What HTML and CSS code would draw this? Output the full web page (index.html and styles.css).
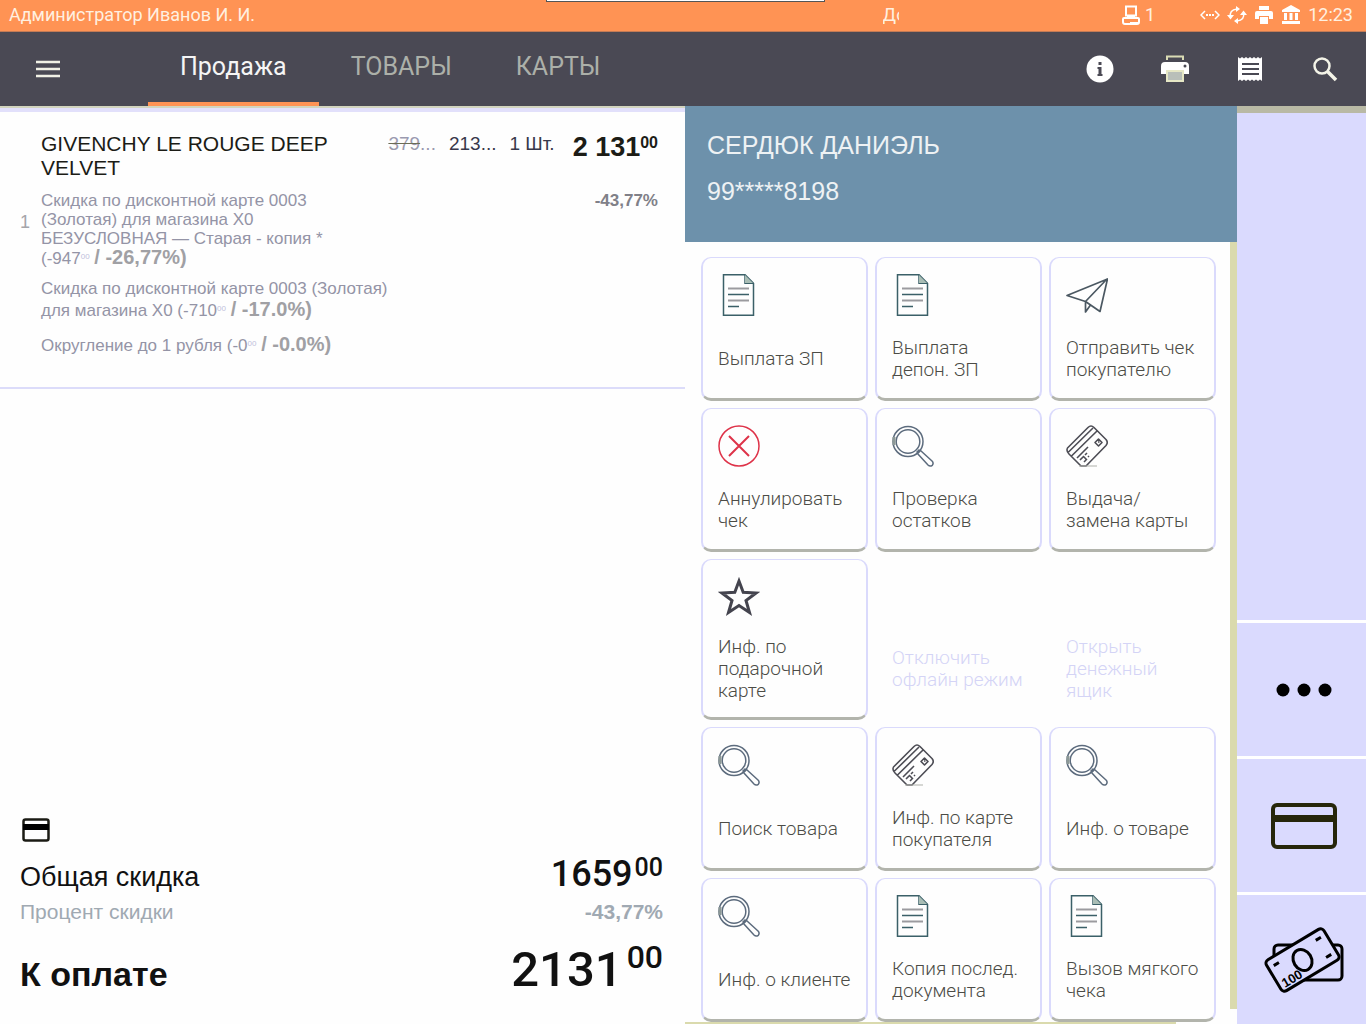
FILE: index.html
```html
<!DOCTYPE html>
<html lang="ru">
<head>
<meta charset="utf-8">
<meta name="viewport" content="width=device-width, initial-scale=1">
<title>Продажа</title>
<link rel="stylesheet" href="styles.css">
</head>
<body>
<svg class="defs" aria-hidden="true">
  <symbol id="doc" viewBox="0 0 42 42"><path d="M5.500 .7H27l8.500 8.500V41.300H5.500zM27 .7V9.200H35.500" fill="none" stroke="#3b6068" stroke-width="1.500"/><path d="M27 1l8 8h-8z" fill="#a9bdb5"/><path d="M10 14.500h21M10 26.500h21" stroke="#9b9b9f" stroke-width="2"/><path d="M10 20.500h21M10 32.500h11" stroke="#3b6068" stroke-width="1.500"/></symbol>
  <symbol id="find" viewBox="0 0 42 42"><g fill="none" stroke="#5c6b7d" stroke-width="1.500"><circle cx="16" cy="16.500" r="15"/><circle cx="16" cy="16.500" r="11.800"/><path d="M25.500 28.500l3-3 11.500 10.500q2 2 .3 4.300-2.300 1.700-4.300-.3zM24.500 27.500l3-3"/></g><path d="M2 12v8" stroke="#8d9997" stroke-width="3"/></symbol>
  <symbol id="card" viewBox="0 0 42 42"><g fill="none" stroke="#4d4d55" stroke-width="1.600" stroke-linejoin="round"><path d="M1.500 23L22 2.500q3-3 6 0l12 12q2.500 3 0 6L20 41h-5L3 29q-3-3-1.500-6zM2.500 27L27 3M5.500 31L31 6M11 33L22 22"/><path d="M32.500 14l3.500 3.500-3.500 3.500-3.500-3.500zM32 17h1.500M14 35l3-3M19 30l2-2M18 37l2-2M22 32l1-1M17 31l4 4"/></g><path d="M13 41h18" stroke="#aeb0aa"/></symbol>
  <symbol id="pay" viewBox="0 0 66 46"><rect x="2" y="2" width="62" height="42" rx="4" fill="none" stroke="currentColor" stroke-width="4"/><path d="M2 12h62v7H2z" fill="currentColor"/></symbol>
</svg>

<header class="status">
  <span class="status-user">Администратор Иванов И. И.</span>
  <span class="status-handle"></span>
  <span class="status-mode">До</span>
  <div class="status-side">
    <svg class="ic-net" viewBox="0 0 18 20"><path d="M4 1.500h10v9H4zM2 13h14q1 0 1 1v3q0 2-2 2H3q-2 0-2-2v-3q0-1 1-1z" fill="none" stroke="#fff" stroke-width="2"/><path d="M8 17h9v2H8zM5 10h8v3H5z" fill="#fff"/></svg>
    <span class="status-count">1</span>
    <svg class="ic-link" viewBox="0 0 20 20"><path d="M5 6L1 10l4 4M15 6l4 4-4 4" fill="none" stroke="#fff" stroke-width="1.500"/><path d="M6 9h2v2H6zM9 9h2v2H9zM12 9h2v2h-2z" fill="#fff"/></svg>
    <svg viewBox="0 0 20 20"><path d="M3.500 12Q2 5 10 4M16.500 8q1.500 7-6.500 8" fill="none" stroke="#fff" stroke-width="1.500"/><path d="M0 10h7l-3.500 4.500zM13 10h7l-3.500-4.500zM9 1l4 3-4 3zM11 13l-4 3 4 3z" fill="#fff"/></svg>
    <svg viewBox="0 0 20 20"><path d="M5 1h10v4H5zM3 6h14q2 0 2 2v6h-4v-3H5v3H1V8q0-2 2-2zM6 12h8v7H6z" fill="#fff"/></svg>
    <svg viewBox="0 0 20 20"><path d="M10 0l9 5v2H1V5zM3 8h3v7H3zM8.500 8h3v7h-3zM14 8h3v7h-3zM1 16h18v3H1z" fill="#fff"/></svg>
    <time class="status-time">12:23</time>
  </div>
</header>

<nav class="nav">
  <button class="nav-btn nav-menu" aria-label="Меню"><svg viewBox="0 0 24 18"><path d="M0 2h24M0 9h24M0 16h24" stroke="#f1f1e6" stroke-width="2.500"/></svg></button>
  <div class="tabs">
    <a class="tab active" href="#sale">Продажа</a>
    <a class="tab" href="#goods">ТОВАРЫ</a>
    <a class="tab" href="#cards">КАРТЫ</a>
  </div>
  <div class="nav-tools">
    <button class="nav-btn" aria-label="Информация"><svg viewBox="0 0 28 28"><circle cx="14" cy="14" r="13.500" fill="#fff"/><path d="M12.500 7h3v3h-3zM11.500 12h4v7h1v2h-5v-2h1v-5h-1z" fill="#4a4954"/></svg></button>
    <button class="nav-btn" aria-label="Печать"><svg viewBox="0 0 28 28"><path d="M6 5V1.500h16V5" fill="none" stroke="#d9dbb4" stroke-width="2"/><path d="M4 7h20q4 0 4 4v8h-5v-4H5v4H0v-8q0-4 4-4z" fill="#fff"/><path d="M6 16h16v10H6z" fill="#b9bfb9" stroke="#e6e7c5" stroke-width="2"/><circle cx="24" cy="11" r="1.500" fill="#4a4954"/></svg></button>
    <button class="nav-btn" aria-label="Чек"><svg viewBox="0 0 28 28"><path d="M2 2l2 1.500L6 2l2 1.500L10 2l2 1.500L14 2l2 1.500L18 2l2 1.500L22 2l2 1.500L26 2v24l-2-1.500-2 1.500-2-1.500-2 1.500-2-1.500-2 1.500-2-1.500-2 1.500-2-1.500L6 26l-2-1.500L2 26z" fill="#fff"/><path d="M6 9h17M6 14h17M6 19h17" stroke="#4a4954" stroke-width="2"/></svg></button>
    <button class="nav-btn" aria-label="Поиск"><svg viewBox="0 0 28 28"><circle cx="11" cy="11" r="7.500" fill="none" stroke="#f4f4e8" stroke-width="2.500"/><path d="M16 16l9 9" stroke="#f4f4e8" stroke-width="3.500"/></svg></button>
  </div>
</nav>

<main class="main">
  <section class="receipt">
    <article class="item">
      <span class="item-no">1</span>
      <div class="item-body">
        <div class="item-head">
          <h2 class="item-name">GIVENCHY LE ROUGE DEEP VELVET</h2>
          <span class="cell old"><s>379</s>...</span>
          <span class="cell">213...</span>
          <span class="cell">1 Шт.</span>
          <strong class="item-sum">2 131<sup>00</sup></strong>
        </div>
        <div class="item-line">
          <p class="disc disc-first">Скидка по дисконтной карте 0003 (Золотая) для магазина X0 БЕЗУСЛОВНАЯ — Старая - копия * (-947<sup>00</sup> <b>/ -26,77%)</b></p>
          <span class="item-pct">-43,77%</span>
        </div>
        <p class="disc disc-wide">Скидка по дисконтной карте 0003 (Золотая) для магазина X0 (-710<sup>00</sup> <b>/ -17.0%)</b></p>
        <p class="disc disc-wide disc-last">Округление до 1 рубля (-0<sup>00</sup> <b>/ -0.0%)</b></p>
      </div>
    </article>
    <div class="totals">
      <svg class="totals-icon" viewBox="0 0 28 24"><rect x="1.500" y="1.500" width="25" height="21" rx="2" fill="none" stroke="#1b1b14" stroke-width="2.500"/><path d="M1 6h26v6H1z" fill="#000"/></svg>
      <div class="total-row"><span class="total-label">Общая скидка</span><span class="amount">1659<sup>00</sup></span></div>
      <div class="total-row total-pct"><span>Процент скидки</span><b>-43,77%</b></div>
      <div class="total-row total-due"><span class="due-label">К оплате</span><span class="amount due">2131<sup>00</sup></span></div>
    </div>
  </section>

  <section class="actions">
    <header class="client"><span>СЕРДЮК ДАНИЭЛЬ</span><span>99*****8198</span></header>
    <div class="scroller">
      <div class="tiles">
        <button class="tile"><svg><use href="#doc"/></svg><span>Выплата ЗП</span></button>
        <button class="tile"><svg><use href="#doc"/></svg><span>Выплата депон. ЗП</span></button>
        <button class="tile"><svg viewBox="0 0 42 42"><path d="M1 21.500L41.500 5 34 37.500 19.500 27.500zM41 5L19.500 27.500v10.500l5-7" fill="none" stroke="#4b5862" stroke-width="1.700" stroke-linejoin="round"/></svg><span>Отправить чек покупателю</span></button>
        <button class="tile"><svg viewBox="0 0 42 42"><path d="M11 11l20 20M31 11L11 31" stroke="#de3349" stroke-width="2"/><circle cx="21" cy="21" r="20" fill="none" stroke="#de3349" stroke-width="1.500"/></svg><span>Аннулировать чек</span></button>
        <button class="tile"><svg><use href="#find"/></svg><span>Проверка остатков</span></button>
        <button class="tile"><svg><use href="#card"/></svg><span>Выдача/ замена карты</span></button>
        <button class="tile"><svg viewBox="0 0 42 42"><path d="M21 5l4.200 11.300 12.800.7-10 7.500 3.500 12-10.500-7-10.500 7 3.500-12L4 17l12.800-.7z" fill="none" stroke="#44444e" stroke-width="3"/></svg><span>Инф. по подарочной карте</span></button>
        <button class="tile off" disabled><i></i><span>Отключить офлайн режим</span></button>
        <button class="tile off" disabled><i></i><span>Открыть денежный ящик</span></button>
        <button class="tile"><svg><use href="#find"/></svg><span>Поиск товара</span></button>
        <button class="tile"><svg><use href="#card"/></svg><span>Инф. по карте покупателя</span></button>
        <button class="tile"><svg><use href="#find"/></svg><span>Инф. о товаре</span></button>
        <button class="tile"><svg><use href="#find"/></svg><span>Инф. о клиенте</span></button>
        <button class="tile"><svg><use href="#doc"/></svg><span>Копия послед. документа</span></button>
        <button class="tile"><svg><use href="#doc"/></svg><span>Вызов мягкого чека</span></button>
      </div>
      <div class="track"></div>
    </div>
    <div class="track-x"></div>
  </section>

  <aside class="side">
    <div class="side-blank"></div>
    <button class="side-btn" aria-label="Ещё"><svg class="dots" viewBox="0 0 56 14"><circle cx="7" cy="7" r="6.500"/><circle cx="28" cy="7" r="6.500"/><circle cx="49" cy="7" r="6.500"/></svg></button>
    <button class="side-btn" aria-label="Оплата картой"><svg class="paycard"><use href="#pay"/></svg></button>
    <button class="side-btn" aria-label="Оплата наличными"><svg class="cash" viewBox="0 0 80 66"><rect x="10" y="18" width="68" height="35" rx="4" fill="none" stroke="#000" stroke-width="3"/><g transform="rotate(-31 38.500 33)"><rect x="5" y="15" width="67" height="36" rx="4" fill="#dadafe" stroke="#000" stroke-width="3"/><ellipse cx="38.500" cy="33" rx="9" ry="11" fill="none" stroke="#000" stroke-width="3"/><path d="M11 23h6M60 23h6M60 43h6" stroke="#000" stroke-width="3"/><text x="9" y="48" class="note">100</text></g></svg></button>
  </aside>
</main>
</body>
</html>
```
FILE: styles.css
```css
* { box-sizing: border-box; }
body {
  margin: 0;
  min-height: 100vh;
  display: flex;
  flex-direction: column;
  background: #fefefe;
  color: #1c1c16;
  font-family: "Liberation Sans", Arial, sans-serif;
}
button { border: 0; padding: 0; background: none; font: inherit; color: inherit; }
h2, p { margin: 0; font-weight: 400; }
.defs { position: absolute; width: 0; height: 0; }

/* Status line */
.status {
  position: relative;
  display: grid;
  grid-template-columns: 65fr 35fr;
  align-items: center;
  height: 32px;
  padding: 0 13px 2px 9px;
  background: #ff9354;
  border-bottom: 1px solid #c47b55;
  color: #fff0e0;
  font: 18px/20px Roboto, sans-serif;
}
.status-handle {
  position: absolute;
  top: 0;
  left: 40%;
  width: 279px;
  height: 2px;
  background: #fff;
  border: solid #555;
  border-width: 0 1px 1px;
}
.status-mode { width: 16px; overflow: hidden; white-space: nowrap; grid-column: 2; grid-row: 1; }
.status-side { grid-column: 2; grid-row: 1; justify-self: end; display: flex; align-items: center; gap: 7px; }
.status-side svg { width: 20px; height: 20px; }
.status-side .ic-net { width: 18px; }
.status-count { margin: 0 38px 0 -2px; }

/* Navigation */
.nav {
  display: flex;
  height: 74px;
  padding: 0 27px 0 36px;
  background: #4a4954;
}
.nav-btn { display: flex; align-items: center; }
.nav-btn svg { width: 28px; height: 28px; }
.nav-menu svg { width: 24px; height: 18px; }
.tabs { display: flex; margin-left: 88px; }
.tab {
  display: flex;
  align-items: center;
  padding: 0 32px;
  border-bottom: 4px solid transparent;
  color: #acb0a9;
  font: 25px/30px Roboto, sans-serif;
  text-decoration: none;
}
.tab.active { color: #f5f5f5; border-color: #ff9354; }
.nav-tools { display: flex; gap: 47px; margin-left: auto; }

.main {
  flex: 1;
  display: grid;
  grid-template-columns: minmax(0, 685fr) minmax(0, 552fr) minmax(0, 129fr);
}

/* Receipt */
.receipt { display: flex; flex-direction: column; border-top: 2px solid #d2d4be; box-shadow: inset 0 4px #e2e0fb; }
.item { display: flex; padding: 24px 27px 30px 20px; border-bottom: 2px solid #dcdcfa; }
.item-no { width: 21px; flex: none; padding-top: 80px; color: #a5a5aa; font-size: 18px; line-height: 20px; }
.item-body { flex: 1; }
.item-head { display: flex; align-items: flex-start; }
.item-name { flex: 1; padding-right: 36px; font-size: 21px; line-height: 24px; }
.cell { padding: 2px 13px 0 0; color: #38384a; font-size: 19px; line-height: 20px; }
.old { color: #9a9ab0; }
.old s { text-decoration-color: #6c6c55; }
.item-sum { padding-left: 5px; font-size: 27px; line-height: 30px; }
.item-sum sup { font-size: 16px; line-height: 16px; vertical-align: 8px; }
.item-line { display: flex; justify-content: space-between; padding-top: 11px; }
.disc { color: #9494a6; font-size: 17px; line-height: 19px; }
.disc b { font-size: 20px; line-height: 19px; color: #a0a0a4; }
.disc sup { font-size: 8px; line-height: 8px; vertical-align: 5px; color: #c0c0dc; }
.disc-first { max-width: 300px; }
.disc-wide { max-width: 360px; margin-top: 10px; line-height: 22px; }
.disc-last { margin-top: 13px; }
.item-pct { color: #808088; font-size: 17px; line-height: 19px; font-weight: 700; }

.totals { margin-top: auto; padding: 0 22px 25px 20px; color: #111; }
.totals-icon { display: block; width: 28px; height: 24px; margin: 0 2px 8px; }
.total-row { display: flex; justify-content: space-between; align-items: baseline; }
.total-label { font-size: 27px; line-height: 32px; }
.amount { font: 500 36px/48px Roboto, sans-serif; }
.amount sup { margin-left: 2px; font-size: 25px; line-height: 28px; vertical-align: 10px; }
.total-pct { color: #a0a9b2; font-size: 21px; line-height: 28px; }
.total-due { padding-top: 14px; }
.due-label { font-size: 34px; line-height: 40px; font-weight: 700; }
.due { font-size: 49px; line-height: 60px; }
.due sup { font-size: 32px; line-height: 34px; margin-left: 4px; vertical-align: 18px; }

/* Customer and actions */
.actions { display: flex; flex-direction: column; }
.client {
  display: flex;
  flex-direction: column;
  gap: 18px;
  height: 136px;
  padding: 25px 22px 0;
  background: #6d91ab;
  color: #eef2f4;
  font: 25px/28px "Liberation Sans", Arial, sans-serif;
}
.scroller { flex: 1; display: flex; }
.tiles {
  flex: 1;
  display: grid;
  grid-template-columns: repeat(3, minmax(0, 1fr));
  align-content: start;
  gap: 7px;
  padding: 15px 14px 0 16px;
}
.tile {
  display: flex;
  flex-direction: column;
  gap: 18px;
  min-height: 144px;
  padding: 16px 14px 15px 15px;
  border: 2px solid #dadafc;
  border-top-width: 1px;
  border-bottom: 3px solid #b2b4ac;
  border-radius: 10px;
  background: #fefefe;
  color: #4c4c46;
  font: 300 19px/22px Roboto, sans-serif;
  text-align: left;
}
.tile svg, .tile i { flex: none; width: 42px; height: 42px; }
.tile span { flex: 1; display: flex; flex-direction: column; justify-content: center; min-height: 48px; }
.off { border-color: transparent; color: #d4d4f6; }
.track { width: 7px; margin-bottom: 13px; background: #dadaad; }
.track-x { width: 89%; height: 3px; background: #dadaad; }

/* Payment column */
.side { display: grid; grid-template-rows: 1fr 133px 133px 130px; gap: 3px; border-top: 7px solid #b9b9a5; background: #fff; }
.side-blank, .side-btn { background: #dadafe; }
.side-btn { display: flex; align-items: center; justify-content: center; padding-left: 4px; }
.dots { width: 56px; height: 14px; }
.paycard { width: 66px; height: 46px; color: #26260a; }
.cash { width: 80px; height: 66px; }
.note { font: 700 13px "Liberation Sans", sans-serif; }
```
